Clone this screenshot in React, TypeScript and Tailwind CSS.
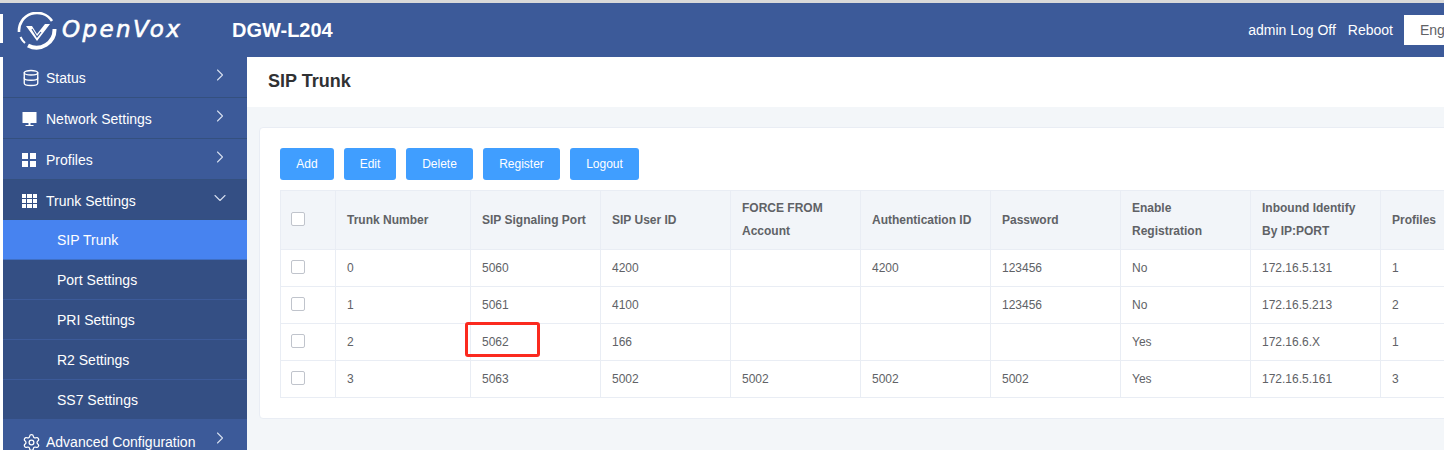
import React from "react";
import { ChevronRight, ChevronDown, Database, Settings } from "lucide-react";

const rows = [
  ["0", "5060", "4200", "", "4200", "123456", "No", "172.16.5.131", "1"],
  ["1", "5061", "4100", "", "", "123456", "No", "172.16.5.213", "2"],
  ["2", "5062", "166", "", "", "", "Yes", "172.16.6.X", "1"],
  ["3", "5063", "5002", "5002", "5002", "5002", "Yes", "172.16.5.161", "3"],
];

const Check = () => (
  <span className="block w-[14px] h-[14px] -translate-y-px -ml-px bg-white border border-[#c0c4cc] rounded-[2px]" />
);

const Logo = () => (
  <div className="flex items-center ml-[17px] w-[215px]">
    <svg width="40" height="38" viewBox="0 0 40 38" fill="none" className="shrink-0 mt-[2px]">
      <path d="M2 20 A18 18 0 0 1 35 9" stroke="#fff" strokeWidth="2.6" />
      <path d="M3.5 25 A18 18 0 0 0 8 31" stroke="#fff" strokeWidth="2" />
      <path d="M11 33.5 A18 18 0 0 0 37.5 17" stroke="#fff" strokeWidth="4" />
      <path d="M9 14 L15 14 L20 22 L28 12 L33 12 L20 29 Z" fill="#fff" />
      <path d="M15 17 L20 25 L24 20" stroke="#3c5a99" strokeWidth="1.2" />
    </svg>
    <span className="ml-[5px] text-[23px] leading-none italic tracking-[2.4px] text-white font-['DejaVu_Sans',sans-serif] [-webkit-text-stroke:0.6px_#fff] mb-[1px]">
      OpenVox
    </span>
  </div>
);

const GridIcon = ({ n }: { n: number }) => (
  <span className={n === 2 ? "grid grid-cols-2 gap-[2px] w-[14px] h-[14px]" : "grid grid-cols-3 gap-px w-[15px] h-[14px]"}>
    {Array.from({ length: n * n }).map((_, i) => (
      <span key={i} className="bg-white" />
    ))}
  </span>
);

const MonitorIcon = () => (
  <svg width="15" height="15" viewBox="0 0 15 15" fill="#fff">
    <rect x="0.5" y="0" width="14" height="11" />
    <rect x="6.5" y="11" width="2" height="2" />
    <rect x="3.5" y="13" width="8" height="1" />
  </svg>
);

const MenuItem = ({
  icon,
  label,
  open,
  h,
  pt,
}: {
  icon: React.ReactNode;
  label: string;
  open?: boolean;
  h: string;
  pt: string;
}) => (
  <div className={`flex items-center pl-[18px] pr-[17px] border-b border-[#34507f] text-white ${h} ${open ? "bg-[#344f84]" : ""}`}>
    <span className={`ml-px w-[24px] flex justify-start ${pt}`}>{icon}</span>
    <span className={`text-[14px] flex-1 ${pt}`}>{label}</span>
    {open ? (
      <ChevronDown size={20} strokeWidth={1.3} className="text-[#d5deee] mb-1" />
    ) : (
      <ChevronRight size={20} strokeWidth={1.3} className="text-[#d5deee] mb-1" />
    )}
  </div>
);

const SubItem = ({ label, active }: { label: string; active?: boolean }) => (
  <div
    className={`h-[40px] flex items-center pl-[54px] pt-[2px] text-[14px] text-white border-b ${
      active ? "bg-[#4783f0] border-[#3f6fc4]" : "bg-[#344f84] border-[#3c5a99]"
    }`}
  >
    {label}
  </div>
);

const Btn = ({ label, w }: { label: string; w: string }) => (
  <button className={`h-[32px] ${w} bg-[#409eff] text-white text-[12px] rounded-[3px]`}>{label}</button>
);

const th = "border border-[#e9edf4] pl-[11px] pr-[9px] text-left align-middle text-[12px] font-bold leading-[23px] text-[#606266]";
const td = "border border-[#e9edf4] pl-[11px] pr-[9px] text-[12px] text-[#606266]";

export default function App() {
  return (
    <div className="relative w-[1444px] h-[450px] overflow-hidden bg-white font-['Liberation_Sans',Arial,sans-serif]">
      <div className="h-[3px] bg-[#d9d9d9]" />
      <header className="h-[54px] bg-[#3c5a99] flex items-center">
        <Logo />
        <h1 className="text-[20px] font-bold text-white">DGW-L204</h1>
        <div className="ml-auto flex items-center text-[14px] text-white">
          <span>admin Log Off</span>
          <span className="ml-[12px]">Reboot</span>
          <div className="ml-[11px] w-[40px] h-[30px] bg-white pl-[16px] leading-[30px] text-[#606266]">
            Eng
          </div>
        </div>
      </header>
      <div className="flex h-[393px]">
        <div className="w-[3px] bg-white shrink-0" />
        <aside className="w-[244px] shrink-0 bg-[#3c5a99] overflow-hidden">
          <MenuItem h="h-[41px]" pt="pt-[2px]" icon={<Database size={18} strokeWidth={1.8} />} label="Status" />
          <MenuItem h="h-[41px]" pt="pt-[2px]" icon={<MonitorIcon />} label="Network Settings" />
          <MenuItem h="h-[41px]" pt="pt-[2px]" icon={<GridIcon n={2} />} label="Profiles" />
          <MenuItem h="h-[40px]" pt="pt-[3px]" icon={<GridIcon n={3} />} label="Trunk Settings" open />
          <SubItem label="SIP Trunk" active />
          <SubItem label="Port Settings" />
          <SubItem label="PRI Settings" />
          <SubItem label="R2 Settings" />
          <SubItem label="SS7 Settings" />
          <MenuItem h="h-[41px]" pt="pt-[4px]" icon={<Settings size={19} strokeWidth={1.6} />} label="Advanced Configuration" />
        </aside>
        <main className="flex-1 min-w-0 bg-[#f3f6f9] overflow-hidden">
          <div className="h-[50px] bg-white flex items-center pl-[21px] pb-[2px]">
            <h2 className="text-[18px] font-bold text-[#303133]">SIP Trunk</h2>
          </div>
          <section className="mt-[20px] ml-[12px] w-[1300px] h-[292px] bg-white border border-[#e9edf4] rounded-[4px] pt-[20px] pl-[20px]">
            <div className="flex gap-[10px]">
              <Btn label="Add" w="w-[54px]" />
              <Btn label="Edit" w="w-[52px]" />
              <Btn label="Delete" w="w-[67px]" />
              <Btn label="Register" w="w-[77px]" />
              <Btn label="Logout" w="w-[69px]" />
            </div>
            <table className="mt-[10px] table-fixed border-collapse w-[1230px]">
              <colgroup>
                <col className="w-[55px]" />
                <col className="w-[135px]" />
                <col className="w-[130px]" />
                <col className="w-[130px]" />
                <col className="w-[130px]" />
                <col className="w-[130px]" />
                <col className="w-[130px]" />
                <col className="w-[130px]" />
                <col className="w-[130px]" />
                <col className="w-[130px]" />
              </colgroup>
              <thead>
                <tr className="h-[59px] bg-[#f2f5f9]">
                  <th className={th}><Check /></th>
                  <th className={th}>Trunk Number</th>
                  <th className={th}>SIP Signaling Port</th>
                  <th className={th}>SIP User ID</th>
                  <th className={th}>FORCE FROM Account</th>
                  <th className={th}>Authentication ID</th>
                  <th className={th}>Password</th>
                  <th className={th}>Enable<br />Registration</th>
                  <th className={th}>Inbound Identify By IP:PORT</th>
                  <th className={th}>Profiles</th>
                </tr>
              </thead>
              <tbody>
                {rows.map((r) => (
                  <tr key={r[0]} className="h-[37px]">
                    <td className={td}><Check /></td>
                    {r.map((c, i) => (
                      <td key={i} className={td}>{c}</td>
                    ))}
                  </tr>
                ))}
              </tbody>
            </table>
          </section>
        </main>
      </div>
      <div className="absolute left-0 top-[14px] w-[3px] h-[29px] bg-white" />
      <div className="absolute left-[465px] top-[322px] w-[75px] h-[35px] border-[3px] border-[#fb2a1f] rounded-[3px] pointer-events-none" />
    </div>
  );
}
